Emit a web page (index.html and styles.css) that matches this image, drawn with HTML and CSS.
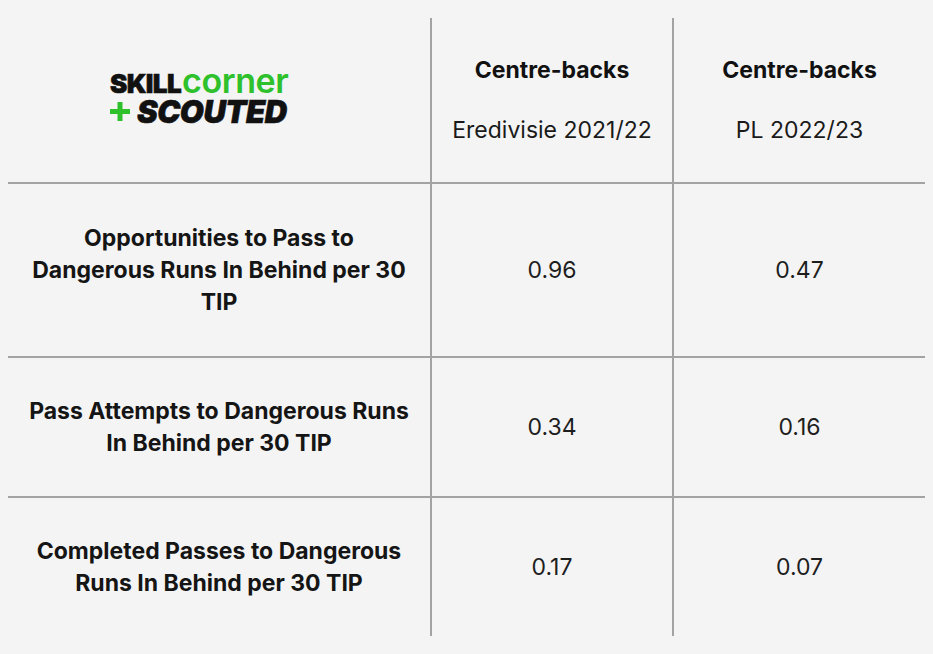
FILE: index.html
```html
<!DOCTYPE html>
<html lang="en">
<head>
<meta charset="utf-8">
<title>SkillCorner + Scouted — Centre-backs comparison</title>
<link rel="stylesheet" href="styles.css">
</head>
<body>
<table class="cmp">
  <colgroup>
    <col class="col-metric">
    <col class="col-a">
    <col class="col-b">
  </colgroup>
  <thead>
    <tr class="row-head">
      <th class="logo-cell">
        <div class="logo">
          <div class="logo-top"><span class="logo-skill">SKILL</span><span class="logo-corner">corner</span></div>
          <div class="logo-bottom">
            <svg class="logo-plus" width="20" height="19" viewBox="0 0 20 19" aria-hidden="true"><path d="M7.5 0h5v7h7.5v5h-7.5v7h-5v-7h-7.5v-5h7.5z" fill="#2fc12c"/></svg>
            <span class="logo-scouted">SCOUTED</span>
          </div>
        </div>
      </th>
      <th class="head-cell">
        <div class="h-pos">Centre-backs</div>
        <div class="h-league">Eredivisie 2021/22</div>
      </th>
      <th class="head-cell">
        <div class="h-pos">Centre-backs</div>
        <div class="h-league">PL 2022/23</div>
      </th>
    </tr>
  </thead>
  <tbody>
    <tr class="row-1">
      <td class="metric">Opportunities to Pass to Dangerous Runs In Behind per 30 TIP</td>
      <td class="val">0.96</td>
      <td class="val">0.47</td>
    </tr>
    <tr class="row-2">
      <td class="metric">Pass Attempts to Dangerous Runs In Behind per 30 TIP</td>
      <td class="val">0.34</td>
      <td class="val">0.16</td>
    </tr>
    <tr class="row-3">
      <td class="metric">Completed Passes to Dangerous Runs In Behind per 30 TIP</td>
      <td class="val">0.17</td>
      <td class="val">0.07</td>
    </tr>
  </tbody>
</table>
</body>
</html>
```

FILE: styles.css
```css
html, body {
  margin: 0;
  background: #f4f4f4;
}

body {
  padding: 18px 8px 0 8px;
  font-family: Inter, "Noto Sans", "Liberation Sans", sans-serif;
  color: #111;
}

.cmp {
  width: 917px;
  border-collapse: collapse;
  table-layout: fixed;
}

.col-metric { width: 423px; }
.col-a { width: 242px; }
.col-b { width: 252px; }

.cmp th,
.cmp td {
  padding: 0 16px;
  text-align: center;
  vertical-align: middle;
  border-left: 2px solid #a3a3a3;
  border-top: 2px solid #a3a3a3;
}

.cmp th:first-child,
.cmp td:first-child {
  border-left: none;
}

.cmp thead th {
  border-top: none;
}

.row-head { height: 165px; }
.row-1 { height: 174px; }
.row-2 { height: 140px; }
.row-3 { height: 139px; }

.head-cell {
  font-weight: normal;
}

.h-pos {
  font-size: 23px;
  line-height: 32px;
  font-weight: 700;
  color: #111;
}

.h-league {
  margin-top: 28px;
  font-size: 23px;
  line-height: 32px;
  font-weight: 400;
  color: #1a1a1a;
}

.metric {
  font-size: 23px;
  line-height: 32px;
  font-weight: 700;
  color: #151515;
}

.val {
  font-size: 23px;
  line-height: 32px;
  font-weight: 400;
  color: #1e1e1e;
}

/* logo */
.cmp .logo-cell {
  text-align: left;
  padding-left: 102px;
}

.logo {
  display: inline-flex;
  flex-direction: column;
  margin-top: -8px;
}

.logo-top {
  display: flex;
  align-items: baseline;
  height: 28px;
  line-height: 28px;
}

.logo-skill {
  font-family: Inter, "Liberation Sans", sans-serif;
  font-weight: 900;
  font-size: 26px;
  letter-spacing: -0.6px;
  color: #111;
  -webkit-text-stroke: 0.6px #111;
}

.logo-corner {
  font-family: Inter, "Liberation Sans", sans-serif;
  font-weight: 600;
  font-size: 34px;
  letter-spacing: -0.4px;
  color: #2fc12c;
  margin-left: 1px;
}

.logo-bottom {
  display: flex;
  align-items: center;
  gap: 7px;
  margin-top: 3px;
}

.logo-scouted {
  font-family: Inter, "Liberation Sans", sans-serif;
  font-weight: 900;
  font-style: italic;
  font-size: 31px;
  line-height: 28px;
  letter-spacing: -0.5px;
  color: #111;
  -webkit-text-stroke: 0.6px #111;
}
```
